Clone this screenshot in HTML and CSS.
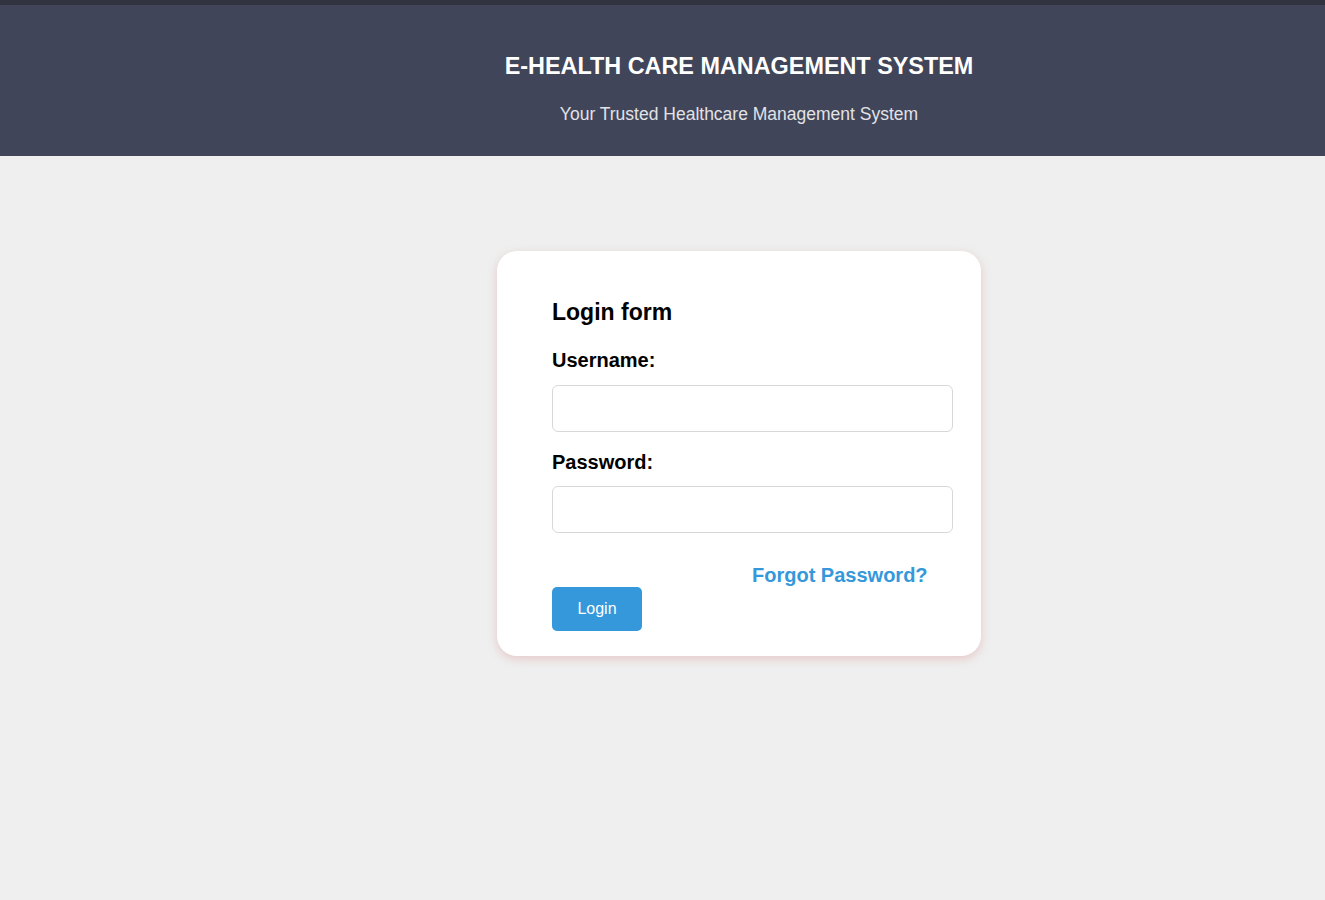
FILE: index.html
```html
<!DOCTYPE html>
<html lang="en">
<head>
<meta charset="utf-8">
<title>E-Health Care Management System</title>
<link rel="stylesheet" href="styles.css">
</head>
<body>
  <header class="header">
    <div class="header-inner">
      <h1 class="title">E-HEALTH CARE MANAGEMENT SYSTEM</h1>
      <p class="subtitle">Your Trusted Healthcare Management System</p>
    </div>
  </header>
  <main class="main">
    <div class="card">
      <h2 class="form-title">Login form</h2>
      <form class="form">
        <label class="label" for="username">Username:</label>
        <input class="input" id="username" type="text">
        <label class="label label-second" for="password">Password:</label>
        <input class="input" id="password" type="password">
        <div class="actions">
          <a class="forgot" href="#">Forgot Password?</a>
          <button class="btn" type="button">Login</button>
        </div>
      </form>
    </div>
  </main>
</body>
</html>
```

FILE: styles.css
```css
* { box-sizing: border-box; }
html, body { margin: 0; padding: 0; }
body {
  background: #efefef;
  font-family: "Liberation Sans", Arial, sans-serif;
  min-height: 900px;
}
.header {
  background: #404559;
  border-top: 5px solid #31343f;
  height: 156px;
  padding-left: 153px;
}
.header-inner {
  text-align: center;
  padding-top: 45px;
}
.title {
  margin: 0;
  color: #ffffff;
  font-size: 23.4px;
  font-weight: bold;
  line-height: 32px;
}
.subtitle {
  margin: 21px 0 0;
  color: #e2e2e6;
  font-size: 17.5px;
  line-height: 22px;
}
.main {
  padding-left: 153px;
  padding-top: 95px;
  display: flex;
  justify-content: center;
}
.card {
  width: 484px;
  height: 405px;
  background: #ffffff;
  border-radius: 20px;
  box-shadow: 0 3px 10px rgba(215, 130, 130, 0.35);
  padding: 44px 28px 0 55px;
}
.form-title {
  margin: 0;
  font-size: 23px;
  font-weight: bold;
  line-height: 34px;
  color: #000;
}
.form { display: flex; flex-direction: column; }
.label {
  font-weight: bold;
  font-size: 20px;
  line-height: 24px;
  color: #000;
  margin-top: 19px;
  margin-bottom: 13px;
}
.label-second {
  margin-top: 18px;
  margin-bottom: 12px;
}
.input {
  width: 401px;
  height: 47px;
  border: 1px solid #d8d8d8;
  border-radius: 6px;
  background: #fff;
  font-size: 16px;
  padding: 0 10px;
  margin: 0;
}
.actions {
  display: flex;
  flex-direction: column;
  margin-top: 30px;
}
.forgot {
  align-self: flex-start;
  margin-left: 200px;
  color: #3498db;
  font-weight: bold;
  font-size: 20px;
  line-height: 24px;
  text-decoration: none;
}
.btn {
  align-self: flex-start;
  width: 90px;
  height: 44px;
  margin-top: 0;
  background: #3498db;
  color: #fff;
  border: none;
  border-radius: 5px;
  font-family: "Liberation Sans", Arial, sans-serif;
  font-size: 16px;
}
```
